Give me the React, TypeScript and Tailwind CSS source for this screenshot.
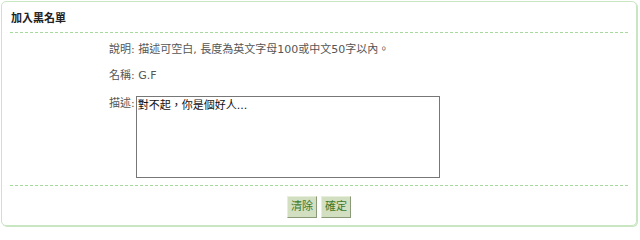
const cjk = { fontFamily: '"DejaVu Sans", "Noto Sans CJK TC", sans-serif' };

export default function App() {
  return (
    <div className="h-[229px] w-[640px] bg-white p-[1px]" style={cjk}>
      <div className="h-[225px] w-[636px] rounded-[5px] border border-[#c9e6c3] shadow-[1px_1px_0_#c9e6c3]">
        <div className="px-[8px]">
          <h2 className="pt-[10px] pb-[7px] pl-[1px] text-[11px] font-bold leading-[13px] text-[#222]">
            加入黑名單
          </h2>
          <div className="border-t border-dashed border-[#a6d99c]" />

          <div className="pl-[99px] pt-[7px] text-[11px] leading-[13px] text-[#555]">
            <p className="py-[2px]">
              說明: 描述可空白, 長度為英文字母100或中文50字以內
              <span style={{ fontFamily: '"Noto Sans CJK TC", sans-serif' }}>。</span>
            </p>
            <p className="mt-[9px] py-[2px]">名稱: G.F</p>
            <div className="mt-[12px] flex items-start">
              <span className="pt-[1px]">描述:</span>
              <textarea
                defaultValue="對不起，你是個好人..."
                className="ml-[1px] h-[82px] w-[304px] resize-none border border-[#777] px-[1px] py-[2px] text-[11px] leading-[13px] text-[#111] outline-none"
                style={cjk}
              />
            </div>
          </div>

          <div className="mt-[7px] border-t border-dashed border-[#a6d99c]" />

          <div className="flex justify-center gap-[4px] pt-[10px]">
            <button className="h-[22px] w-[30px] border border-t-[#e8eedc] border-l-[#e8eedc] border-r-[#8a9a78] border-b-[#8a9a78] bg-[#d3dfc1] text-[11px] text-[#3d7a2a]">
              清除
            </button>
            <button className="h-[22px] w-[30px] border border-t-[#e8eedc] border-l-[#e8eedc] border-r-[#8a9a78] border-b-[#8a9a78] bg-[#d3dfc1] text-[11px] text-[#3d7a2a]">
              確定
            </button>
          </div>
        </div>
      </div>
    </div>
  );
}
